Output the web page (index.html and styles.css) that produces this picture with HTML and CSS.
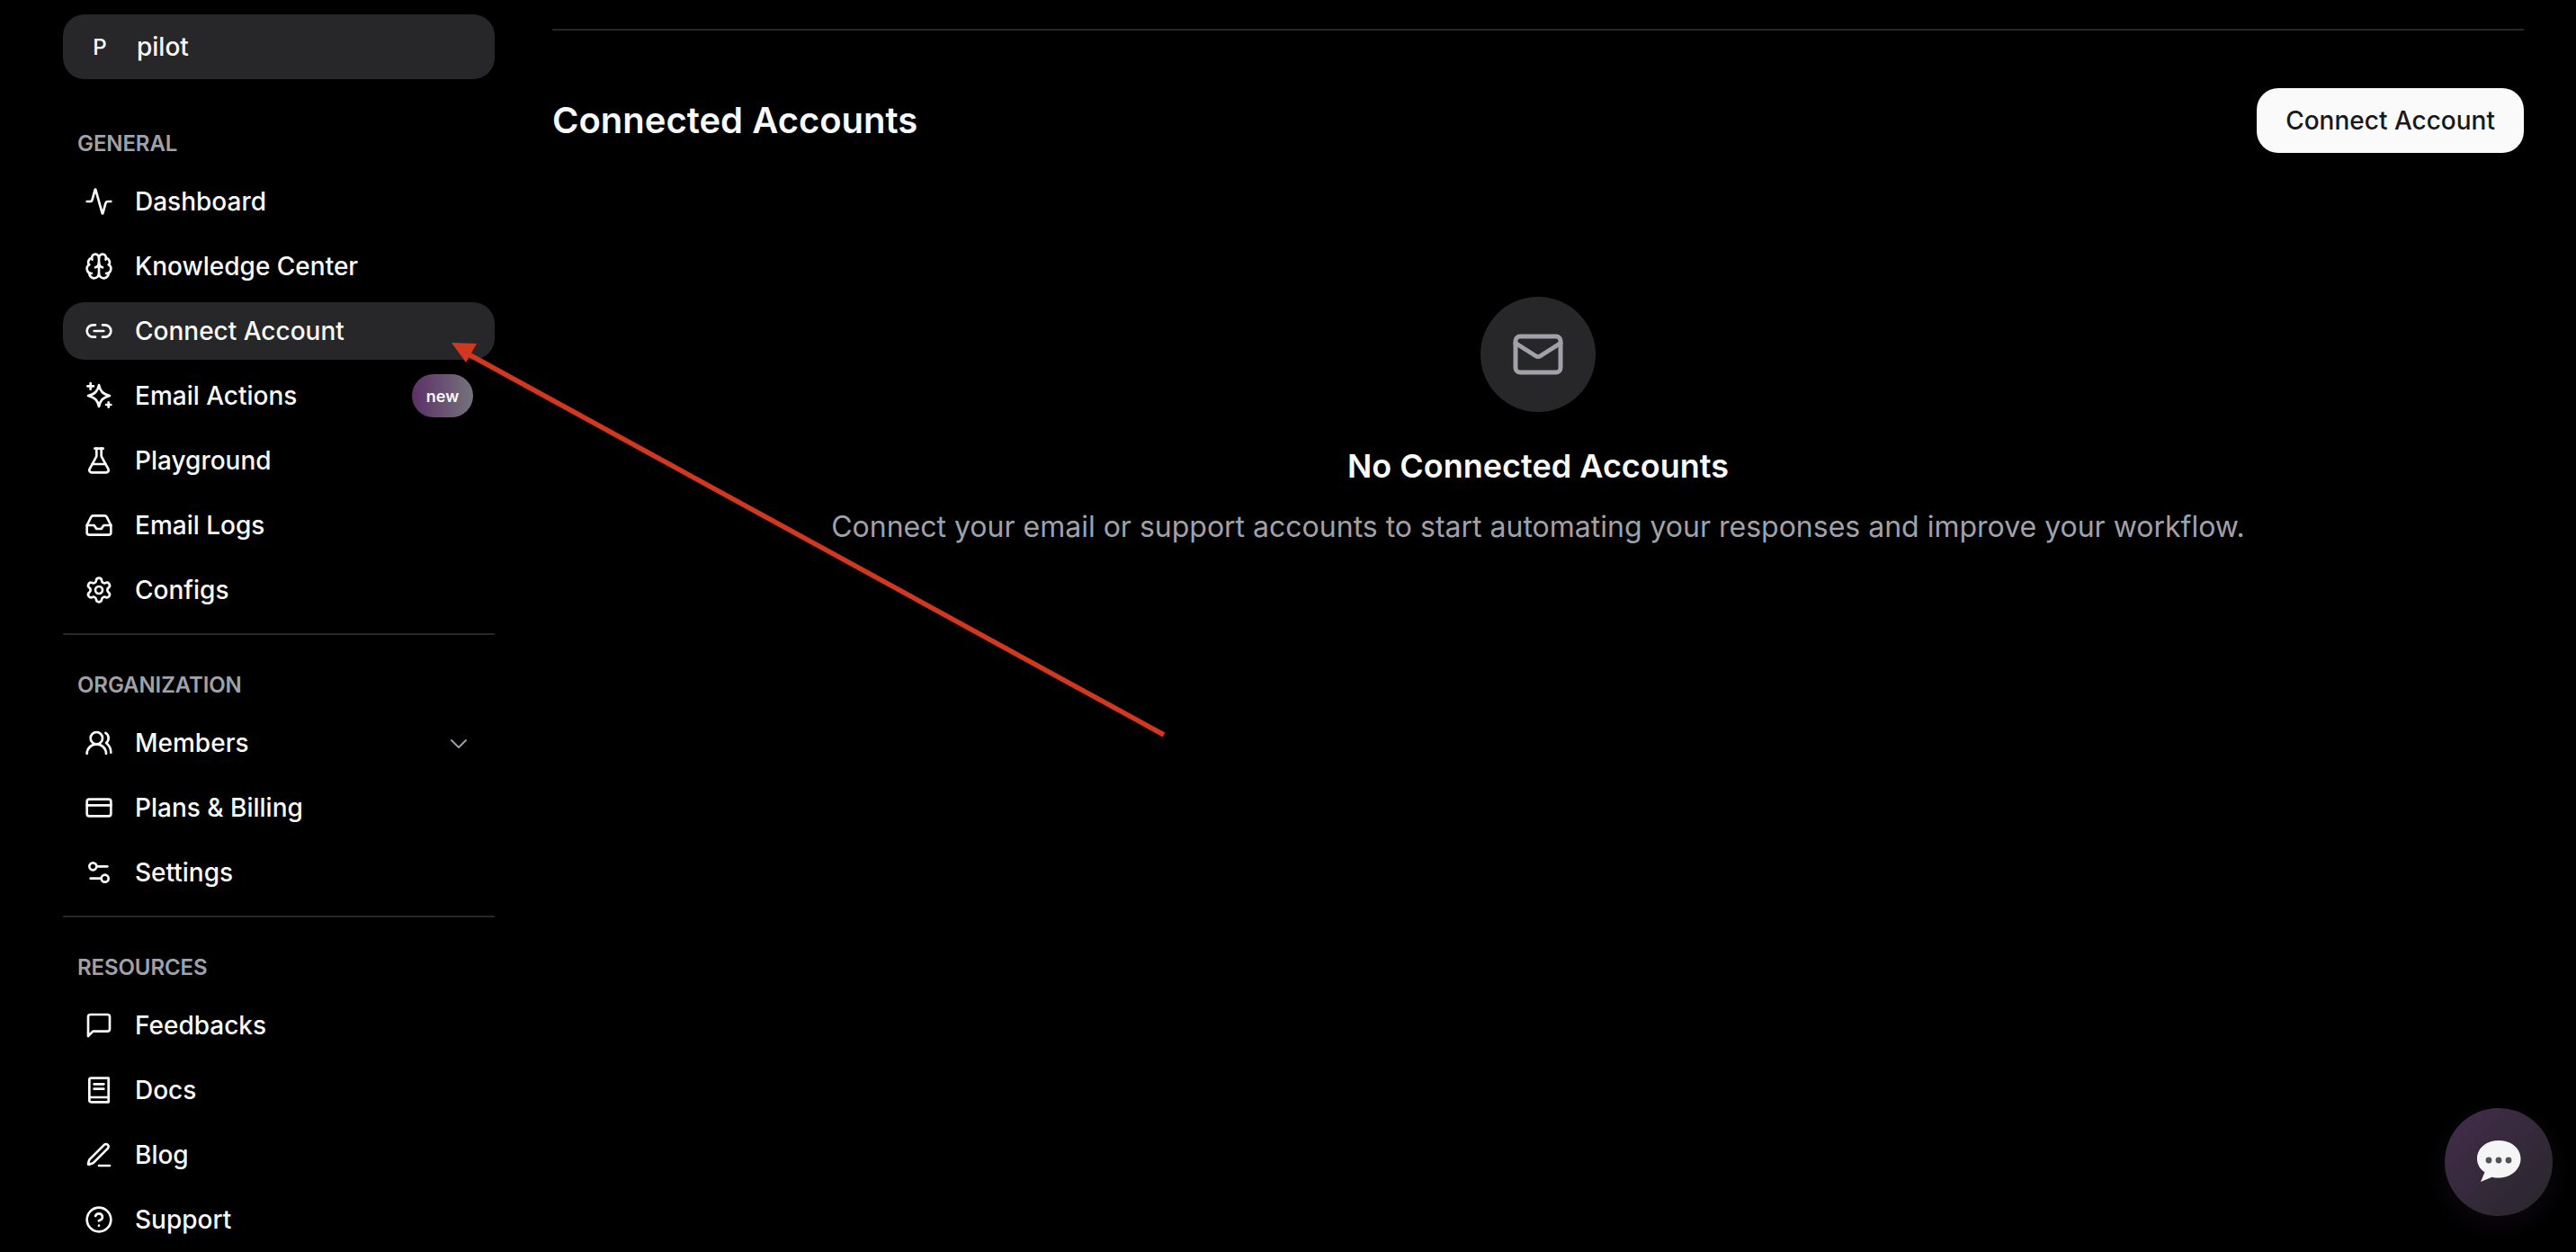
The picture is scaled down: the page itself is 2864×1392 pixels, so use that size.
FILE: index.html
```html
<!DOCTYPE html>
<html lang="en">
<head>
<meta charset="utf-8">
<title>Connected Accounts</title>
<link rel="stylesheet" href="styles.css">
</head>
<body>
<div class="app">
  <aside class="sidebar">
    <div class="workspace"><span class="workspace-initial">P</span><span class="workspace-name">pilot</span></div>

    <div class="group-label">GENERAL</div>
    <nav class="nav">
      <a class="nav-item"><svg class="icon" viewBox="0 0 24 24"><path d="M22 12h-2.48a2 2 0 0 0-1.93 1.46l-2.35 8.36a.25.25 0 0 1-.48 0L9.24 2.18a.25.25 0 0 0-.48 0l-2.35 8.36A2 2 0 0 1 4.49 12H2"/></svg><span>Dashboard</span></a>
      <a class="nav-item"><svg class="icon" viewBox="0 0 24 24"><path d="M12 18V5"/><path d="M15 13a4.17 4.17 0 0 1-3-4 4.17 4.17 0 0 1-3 4"/><path d="M17.598 6.5A3 3 0 1 0 12 5a3 3 0 1 0-5.598 1.5"/><path d="M17.997 5.125a4 4 0 0 1 2.526 5.77"/><path d="M18 18a4 4 0 0 0 2-7.464"/><path d="M19.967 17.483A4 4 0 1 1 12 18a4 4 0 1 1-7.967-.517"/><path d="M6 18a4 4 0 0 1-2-7.464"/><path d="M6.003 5.125a4 4 0 0 0-2.526 5.77"/></svg><span>Knowledge Center</span></a>
      <a class="nav-item active"><svg class="icon" viewBox="0 0 24 24"><path d="M9 17H7A5 5 0 0 1 7 7h2"/><path d="M15 7h2a5 5 0 1 1 0 10h-2"/><path d="M8 12h8"/></svg><span>Connect Account</span></a>
      <a class="nav-item"><svg class="icon" viewBox="0 0 24 24"><path d="M12 3c1 5 3 7.500 9 9-6 1.500-8 4-9 9-1-5-3-7.500-9-9 6-1.500 8-4 9-9z"/><path d="M5 1.500v5M2.500 4h5"/><path d="M20 17.500v4M18 19.500h4"/></svg><span>Email Actions</span><span class="badge">new</span></a>
      <a class="nav-item"><svg class="icon" viewBox="0 0 24 24"><path d="M14 2v6a2 2 0 0 0 .245.96l5.51 10.08A2 2 0 0 1 18 22H6a2 2 0 0 1-1.755-2.96l5.51-10.08A2 2 0 0 0 10 8V2"/><path d="M6.453 15h11.094"/><path d="M8.500 2h7"/></svg><span>Playground</span></a>
      <a class="nav-item"><svg class="icon" viewBox="0 0 24 24"><path d="M22 12h-6l-2 3h-4l-2-3H2"/><path d="M5.450 5.110 2 12v6a2 2 0 0 0 2 2h16a2 2 0 0 0 2-2v-6l-3.450-6.890A2 2 0 0 0 16.760 4H7.240a2 2 0 0 0-1.790 1.110z"/></svg><span>Email Logs</span></a>
      <a class="nav-item"><svg class="icon" viewBox="0 0 24 24"><path d="M9.671 4.136a2.340 2.340 0 0 1 4.659 0 2.340 2.340 0 0 0 3.319 1.915 2.340 2.340 0 0 1 2.330 4.033 2.340 2.340 0 0 0 0 3.831 2.340 2.340 0 0 1-2.330 4.033 2.340 2.340 0 0 0-3.319 1.915 2.340 2.340 0 0 1-4.659 0 2.340 2.340 0 0 0-3.320-1.915 2.340 2.340 0 0 1-2.330-4.033 2.340 2.340 0 0 0 0-3.831A2.340 2.340 0 0 1 6.350 6.051a2.340 2.340 0 0 0 3.319-1.915"/><circle cx="12" cy="12" r="3"/></svg><span>Configs</span></a>
    </nav>
    <div class="divider"></div>

    <div class="group-label">ORGANIZATION</div>
    <nav class="nav">
      <a class="nav-item"><svg class="icon" viewBox="0 0 24 24"><path d="M18 21a8 8 0 0 0-16 0"/><circle cx="10" cy="8" r="5"/><path d="M22 20c0-3.370-2-6.500-4-8a5 5 0 0 0-.450-8.300"/></svg><span>Members</span><svg class="chevron" viewBox="0 0 24 24"><path d="m6 9 6 6 6-6"/></svg></a>
      <a class="nav-item"><svg class="icon" viewBox="0 0 24 24"><rect x="2" y="5" width="20" height="14" rx="2"/><path d="M2 10h20"/></svg><span>Plans &amp; Billing</span></a>
      <a class="nav-item"><svg class="icon" viewBox="0 0 24 24"><path d="M14 17H5"/><path d="M19 7h-9"/><circle cx="17" cy="17" r="3"/><circle cx="7" cy="7" r="3"/></svg><span>Settings</span></a>
    </nav>
    <div class="divider"></div>

    <div class="group-label">RESOURCES</div>
    <nav class="nav">
      <a class="nav-item"><svg class="icon" viewBox="0 0 24 24"><path d="M21 15a2 2 0 0 1-2 2H7l-4 4V5a2 2 0 0 1 2-2h14a2 2 0 0 1 2 2z"/></svg><span>Feedbacks</span></a>
      <a class="nav-item"><svg class="icon" viewBox="0 0 24 24"><path d="M20 2H5.500A1.500 1.500 0 0 0 4 3.500v17A1.500 1.500 0 0 0 5.500 22H20z"/><path d="M4 18h16"/><path d="M8 7h8"/><path d="M8 11h8"/></svg><span>Docs</span></a>
      <a class="nav-item"><svg class="icon" viewBox="0 0 24 24"><path d="M12 21h9"/><path d="M16.376 3.622a1 1 0 0 1 3.002 3.002L7.368 18.635a2 2 0 0 1-.855.506l-2.872.838a.5.5 0 0 1-.62-.62l.838-2.872a2 2 0 0 1 .506-.854z"/></svg><span>Blog</span></a>
      <a class="nav-item"><svg class="icon" viewBox="0 0 24 24"><circle cx="12" cy="12" r="10"/><path d="M9.090 9a3 3 0 0 1 5.830 1c0 2-3 3-3 3"/><path d="M12 17h.01"/></svg><span>Support</span></a>
    </nav>
  </aside>

  <main class="main">
    <div class="top-rule"></div>
    <header class="page-header">
      <h1 class="page-title">Connected Accounts</h1>
      <button class="primary-button">Connect Account</button>
    </header>
    <section class="empty">
      <div class="empty-circle"><svg class="empty-icon" viewBox="0 0 24 24"><rect x="2" y="4" width="20" height="16" rx="2"/><path d="m22 7-8.970 5.700a1.940 1.940 0 0 1-2.060 0L2 7"/></svg></div>
      <h2 class="empty-title">No Connected Accounts</h2>
      <p class="empty-text">Connect your email or support accounts to start automating your responses and improve your workflow.</p>
    </section>
  </main>
</div>

<svg class="annotation" viewBox="0 0 2864 1392"><path class="annotation-line" d="M1294 817 512 389"/><path class="annotation-head" d="M502 381 530 382 518 403z"/></svg>

<button class="chat-launcher" aria-label="Chat"><svg class="chat-icon" viewBox="0 0 50 48"><path class="chat-bubble" d="M25 1C11.500 1 1 9.500 1 21c0 6.500 3.200 11.800 8.500 15.300L5 47l12.500-5.300c2.400.6 4.900.9 7.500.9 13.500 0 24.500-9.300 24.500-21.300S38.500 1 25 1z"/><circle class="chat-dot" cx="14" cy="23" r="3.400"/><circle class="chat-dot" cx="25" cy="23" r="3.400"/><circle class="chat-dot" cx="36" cy="23" r="3.400"/></svg></button>
</body>
</html>
```
FILE: styles.css
```css
* { box-sizing: border-box; }
html, body { margin: 0; height: 1392px; overflow: hidden; background: #000; }
body { font-family: Inter, "Liberation Sans", sans-serif; color: #fafafa; position: relative; }

.app { display: flex; height: 1392px; padding-left: 70px; padding-right: 58px; }

.sidebar { width: 480px; flex: none; padding-top: 16px; }
.workspace { height: 72px; border-radius: 24px; background: #27272a; display: flex; align-items: center; padding-left: 25px; margin-bottom: 56px; font-weight: 550; }
.workspace-initial { width: 32px; text-align: center; font-size: 24px; margin-right: 25px; }
.workspace-name { font-size: 28px; }

.group-label { height: 32px; line-height: 32px; margin-bottom: 16px; padding-left: 16px; font-size: 24px; font-weight: 600; letter-spacing: -0.1px; color: #a1a1aa; }
.nav { display: flex; flex-direction: column; gap: 8px; }
.nav-item { height: 64px; border-radius: 24px; display: flex; align-items: center; padding: 0 24px; gap: 24px; font-size: 28px; font-weight: 550; color: #fafafa; }
.nav-item.active { background: #27272a; }
.icon { width: 32px; height: 32px; flex: none; fill: none; stroke: currentColor; stroke-width: 2; stroke-linecap: round; stroke-linejoin: round; }
.chevron { width: 32px; height: 32px; margin-left: auto; margin-top: 2px; fill: none; stroke: #a1a1aa; stroke-width: 1.4; stroke-linecap: round; stroke-linejoin: round; }
.badge { margin-left: auto; width: 68px; height: 48px; border-radius: 24px; display: flex; align-items: center; justify-content: center; font-size: 18px; font-weight: 600; color: #fafafa; background: linear-gradient(90deg, #5b3168, #76727b); }
.divider { height: 2px; background: #27272a; margin-top: 16px; margin-bottom: 40px; }

.main { flex: 1; margin-left: 64px; min-width: 0; padding-top: 32px; }
.top-rule { height: 2px; background: #27272a; }
.page-header { display: flex; align-items: center; justify-content: space-between; margin-top: 64px; height: 72px; }
.page-title { margin: 0; font-size: 40px; line-height: 56px; font-weight: 600; color: #fafafa; }
.primary-button { height: 72px; padding: 0 32px; border: 0; border-radius: 24px; background: #fafafa; color: #18181b; font-family: inherit; font-size: 28px; font-weight: 500; }

.empty { display: flex; flex-direction: column; align-items: center; margin-top: 160px; }
.empty-circle { width: 128px; height: 128px; border-radius: 50%; background: #27272a; display: flex; align-items: center; justify-content: center; }
.empty-icon { width: 60px; height: 60px; fill: none; stroke: #a1a1aa; stroke-width: 2; stroke-linecap: round; stroke-linejoin: round; }
.empty-title { margin: 32px 0 0; font-size: 36px; line-height: 56px; font-weight: 600; color: #fafafa; }
.empty-text { margin: 16px 0 0; font-size: 32px; line-height: 48px; font-weight: 400; color: #a1a1aa; }

.annotation { position: absolute; left: 0; top: 0; width: 2864px; height: 1392px; pointer-events: none; }
.annotation-line { stroke: #d1381f; stroke-width: 5.5; fill: none; }
.annotation-head { fill: #d1381f; }

.chat-launcher { position: absolute; right: 26px; bottom: 40px; width: 120px; height: 120px; padding: 0; border: 0; border-radius: 50%; background: linear-gradient(135deg, #432c4c, #27272a); box-shadow: 0 8px 32px rgba(80, 50, 90, .18); display: flex; align-items: center; justify-content: center; }
.chat-icon { width: 50px; height: 48px; margin-top: -2px; }
.chat-bubble { fill: #f5f5f5; }
.chat-dot { fill: #52525b; }
```
